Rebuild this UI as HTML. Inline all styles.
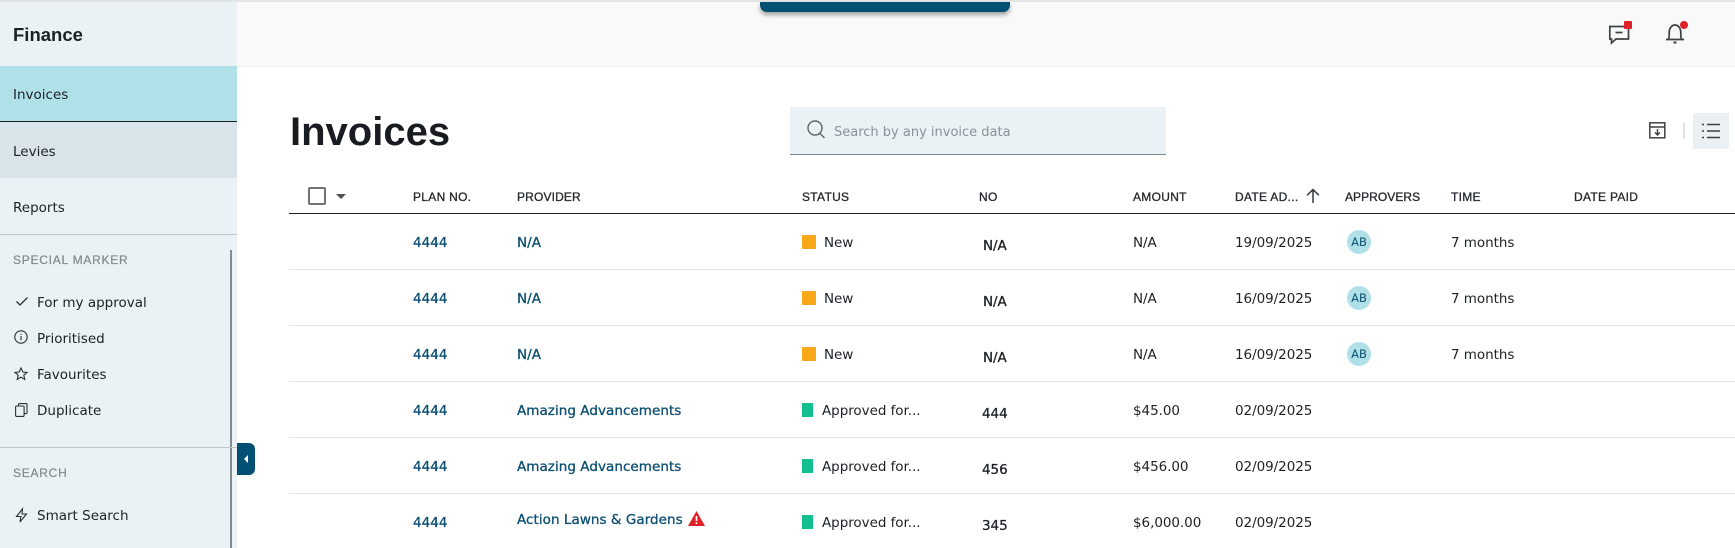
<!DOCTYPE html>
<html><head><meta charset="utf-8"><style>
*{box-sizing:border-box}
html,body{margin:0;padding:0;background:#fff}
body{width:1735px;height:548px;position:relative;overflow:hidden;font-family:"DejaVu Sans",sans-serif;font-size:14px;color:#1c2126}
.a{position:absolute}
.t{position:absolute;line-height:20px;height:20px;white-space:nowrap;margin-top:1px}
.h{font-family:"Liberation Sans",sans-serif;font-size:12px;letter-spacing:.3px;color:#24282c;-webkit-text-stroke:.3px #24282c}
.d{font-size:13.5px;color:#1c2126;letter-spacing:-.05px}
.l{color:#0b4f72;-webkit-text-stroke:.3px #0b4f72;letter-spacing:.05px}
.b{-webkit-text-stroke:.3px #1c2126}
.sq{position:absolute;width:14px;height:14px}
.ln{position:absolute;left:289px;right:0;height:1px;background:#e2e4e5}
.av{position:absolute;left:1347px;width:24px;height:24px;border-radius:50%;background:#b0e0e8;color:#0b4f72;font-size:11.5px;line-height:24px;text-align:center}
.nav{font-size:13.5px}
svg{position:absolute;overflow:visible}
</style></head><body>
<div class="a" style="left:0;top:0;width:1735px;height:2px;background:#e2e4e5"></div>
<div class="a" style="left:237px;top:2px;right:0;height:65px;background:#f9f9f9;border-bottom:1px solid #efefef"></div>
<div class="a" style="left:760px;top:2px;width:250px;height:10px;background:#014f73;border-radius:0 0 7px 7px;box-shadow:0 3px 5px rgba(0,0,0,.35)"></div>

<!-- sidebar -->
<div class="a" style="left:0;top:2px;width:237px;height:546px;background:#ebf2f6"></div>
<div class="t" style="left:13px;top:24px;font-family:'Liberation Sans',sans-serif;font-weight:700;font-size:18.5px;color:#1c2126">Finance</div>
<div class="a" style="left:0;top:66px;width:237px;height:55px;background:#b0e0e8"></div>
<div class="a" style="left:0;top:121px;width:237px;height:1px;background:#1c2126"></div>
<div class="a" style="left:0;top:122px;width:237px;height:56px;background:#d8e4ea"></div>
<div class="t nav" style="left:13px;top:84px">Invoices</div>
<div class="t nav" style="left:13px;top:141px">Levies</div>
<div class="t nav" style="left:13px;top:197px">Reports</div>
<div class="a" style="left:0;top:234px;width:237px;height:1px;background:#c0c5c9"></div>
<div class="t" style="left:13px;top:249px;font-family:'Liberation Sans',sans-serif;font-size:12px;letter-spacing:.75px;color:#81888d;-webkit-text-stroke:.2px #81888d">SPECIAL MARKER</div>
<div class="a" style="left:230px;top:250px;width:2px;height:298px;background:#868c90"></div>

<svg style="left:15px;top:294px" width="14" height="14" viewBox="0 0 14 14" fill="none" stroke="#2a3036" stroke-width="1.3"><path d="M1.500 7.500l3.500 3.500 7.500-7.500"/></svg>
<div class="t nav" style="left:37px;top:292px">For my approval</div>
<svg style="left:14px;top:330px" width="14" height="14" viewBox="0 0 14 14" fill="none" stroke="#2a3036" stroke-width="1.1"><circle cx="7" cy="7" r="6.2"/><path d="M7 6v4.200M7 3.600v1.200"/></svg>
<div class="t nav" style="left:37px;top:328px">Prioritised</div>
<svg style="left:14px;top:367px" width="14" height="14" viewBox="0 0 14 14" fill="none" stroke="#2a3036" stroke-width="1.1"><path d="M7 1l1.800 4 4.200.4-3.200 2.800 1 4.300L7 10.200 3.200 12.500l1-4.300L1 5.400l4.200-.4z"/></svg>
<div class="t nav" style="left:37px;top:364px">Favourites</div>
<svg style="left:15px;top:403px" width="13" height="14" viewBox="0 0 13 14" fill="none" stroke="#2a3036" stroke-width="1.1"><rect x=".6" y="3" width="8.500" height="10.400" rx="1"/><path d="M3.500 3V1.600q0-1 1-1h6.500q1 0 1 1v8q0 1-1 1H9.100"/></svg>
<div class="t nav" style="left:37px;top:400px">Duplicate</div>
<div class="a" style="left:0;top:447px;width:237px;height:1px;background:#c0c5c9"></div>
<div class="t" style="left:13px;top:462px;font-family:'Liberation Sans',sans-serif;font-size:12px;letter-spacing:.75px;color:#81888d;-webkit-text-stroke:.2px #81888d">SEARCH</div>
<svg style="left:15px;top:508px" width="13" height="15" viewBox="0 0 13 15" fill="none" stroke="#2a3036" stroke-width="1.1"><path d="M7.500.8L1.500 8.500h4.500L5 14l6.500-8H7z"/></svg>
<div class="t nav" style="left:37px;top:505px">Smart Search</div>
<div class="a" style="left:237px;top:443px;width:18px;height:32px;background:#014f73;border-radius:0 6px 6px 0"></div>
<div class="a" style="left:244px;top:455px;width:0;height:0;border-top:4px solid transparent;border-bottom:4px solid transparent;border-right:4px solid #fff"></div>

<!-- topbar icons -->
<svg style="left:1609px;top:24px" width="24" height="22" viewBox="0 0 24 22" fill="none" stroke="#3c4144" stroke-width="1.7"><path d="M.8 2.500H19.500V15H7L2.500 19V15H.8z"/><path d="M6.500 8.500h7"/></svg>
<div class="a" style="left:1624px;top:21px;width:8px;height:8px;background:#e01f26;border-radius:1px"></div>
<svg style="left:1665px;top:23px" width="22" height="22" viewBox="0 0 22 22" fill="none" stroke="#3c4144" stroke-width="1.7"><path d="M1 16.500h18M3 16.500c1-1 1.200-2 1.200-4V9.500C4.200 5.500 6.500 2 10 2s5.800 3.500 5.800 7.500v3c0 2 .2 3 1.200 4"/><path d="M8.500 19.500h3" stroke-width="2"/></svg>
<div class="a" style="left:1680px;top:21px;width:8px;height:8px;background:#e01f26;border-radius:50%"></div>

<!-- title + search -->
<div class="t" style="left:290px;top:106px;height:50px;line-height:50px;font-family:'Liberation Sans',sans-serif;font-weight:700;font-size:40px;color:#181c20">Invoices</div>
<div class="a" style="left:790px;top:107px;width:376px;height:48px;background:#ebf2f6;border-bottom:1px solid #7e868c"></div>
<svg style="left:807px;top:120px" width="19" height="20" viewBox="0 0 19 20" fill="none" stroke="#5d666c" stroke-width="1.4"><circle cx="8" cy="8" r="7"/><path d="M13 13.500l4.500 4.500"/></svg>
<div class="t" style="left:834px;top:122px;font-size:13px;color:#8a9298">Search by any invoice data</div>

<!-- toolbar icons -->
<svg style="left:1649px;top:122px" width="17" height="17" viewBox="0 0 17 17" fill="none" stroke="#3c4144" stroke-width="1.500"><rect x=".8" y=".8" width="15" height="15"/><path d="M.8 5h15M8.500 7v5.500M6 10.500l2.500 2.500 2.500-2.500"/></svg>
<div class="a" style="left:1683px;top:123px;width:2px;height:16px;background:#e0e2e4"></div>
<div class="a" style="left:1693px;top:113px;width:36px;height:36px;background:#ebf0f4"></div>
<svg style="left:1702px;top:123px" width="18" height="16" viewBox="0 0 18 16" fill="none" stroke="#3c4144" stroke-width="1.4"><path d="M5 1.500h13M5 8h13M5 14.500h13M0 1.500h2M0 8h2M0 14.500h2"/></svg>

<!-- table head -->
<div class="a" style="left:308px;top:187px;width:18px;height:18px;border:2px solid #6e7276;border-radius:2px"></div>
<div class="a" style="left:336px;top:194px;width:0;height:0;border-left:5px solid transparent;border-right:5px solid transparent;border-top:5px solid #4a4f53"></div>
<div class="t h" style="left:413px;top:186px">PLAN NO.</div>
<div class="t h" style="left:517px;top:186px;letter-spacing:.15px">PROVIDER</div>
<div class="t h" style="left:802px;top:186px">STATUS</div>
<div class="t h" style="left:979px;top:186px">NO</div>
<div class="t h" style="left:1133px;top:186px">AMOUNT</div>
<div class="t h" style="left:1235px;top:186px">DATE AD...</div>
<svg style="left:1306px;top:188px" width="14" height="15" viewBox="0 0 14 15" fill="none" stroke="#33383c" stroke-width="1.5"><path d="M7 15V1.500M1.200 7.200L7 1.500l5.800 5.700"/></svg>
<div class="t h" style="left:1345px;top:186px;letter-spacing:.05px">APPROVERS</div>
<div class="t h" style="left:1451px;top:186px">TIME</div>
<div class="t h" style="left:1574px;top:186px">DATE PAID</div>
<div class="a" style="left:289px;right:0;top:213px;height:1px;background:#1c2126"></div>
<div class="ln" style="top:269px"></div><div class="ln" style="top:325px"></div><div class="ln" style="top:381px"></div><div class="ln" style="top:437px"></div><div class="ln" style="top:493px"></div>

<!-- rows -->
<div class="t d l" style="left:413px;top:232px">4444</div><div class="t d l" style="left:517px;top:232px">N/A</div>
<div class="sq" style="left:802px;top:235px;background:#f9a81a"></div><div class="t d" style="left:824px;top:232px">New</div>
<div class="t d b" style="left:983px;top:235px">N/A</div><div class="t d" style="left:1133px;top:232px">N/A</div><div class="t d" style="left:1235px;top:232px">19/09/2025</div>
<div class="av" style="top:230px">AB</div><div class="t d" style="left:1451px;top:232px">7 months</div>

<div class="t d l" style="left:413px;top:288px">4444</div><div class="t d l" style="left:517px;top:288px">N/A</div>
<div class="sq" style="left:802px;top:291px;background:#f9a81a"></div><div class="t d" style="left:824px;top:288px">New</div>
<div class="t d b" style="left:983px;top:291px">N/A</div><div class="t d" style="left:1133px;top:288px">N/A</div><div class="t d" style="left:1235px;top:288px">16/09/2025</div>
<div class="av" style="top:286px">AB</div><div class="t d" style="left:1451px;top:288px">7 months</div>

<div class="t d l" style="left:413px;top:344px">4444</div><div class="t d l" style="left:517px;top:344px">N/A</div>
<div class="sq" style="left:802px;top:347px;background:#f9a81a"></div><div class="t d" style="left:824px;top:344px">New</div>
<div class="t d b" style="left:983px;top:347px">N/A</div><div class="t d" style="left:1133px;top:344px">N/A</div><div class="t d" style="left:1235px;top:344px">16/09/2025</div>
<div class="av" style="top:342px">AB</div><div class="t d" style="left:1451px;top:344px">7 months</div>

<div class="t d l" style="left:413px;top:400px">4444</div><div class="t d l" style="left:517px;top:400px">Amazing Advancements</div>
<div class="sq" style="left:802px;top:403px;width:11px;background:#12bf8e"></div><div class="t d" style="left:822px;top:400px">Approved for...</div>
<div class="t d b" style="left:982px;top:403px">444</div><div class="t d" style="left:1133px;top:400px">$45.00</div><div class="t d" style="left:1235px;top:400px">02/09/2025</div>

<div class="t d l" style="left:413px;top:456px">4444</div><div class="t d l" style="left:517px;top:456px">Amazing Advancements</div>
<div class="sq" style="left:802px;top:459px;width:11px;background:#12bf8e"></div><div class="t d" style="left:822px;top:456px">Approved for...</div>
<div class="t d b" style="left:982px;top:459px">456</div><div class="t d" style="left:1133px;top:456px">$456.00</div><div class="t d" style="left:1235px;top:456px">02/09/2025</div>

<div class="t d l" style="left:413px;top:512px">4444</div><div class="t d l" style="left:517px;top:509px">Action Lawns &amp; Gardens</div>
<svg style="left:688px;top:511px" width="17" height="15" viewBox="0 0 17 15"><path d="M8.500 0L17 15H0z" fill="#e02027"/><path d="M8.500 5v5M8.500 11.200v1.800" stroke="#fff" stroke-width="1.700"/></svg>
<div class="sq" style="left:802px;top:515px;width:11px;background:#12bf8e"></div><div class="t d" style="left:822px;top:512px">Approved for...</div>
<div class="t d b" style="left:982px;top:515px">345</div><div class="t d" style="left:1133px;top:512px">$6,000.00</div><div class="t d" style="left:1235px;top:512px">02/09/2025</div>
</body></html>
